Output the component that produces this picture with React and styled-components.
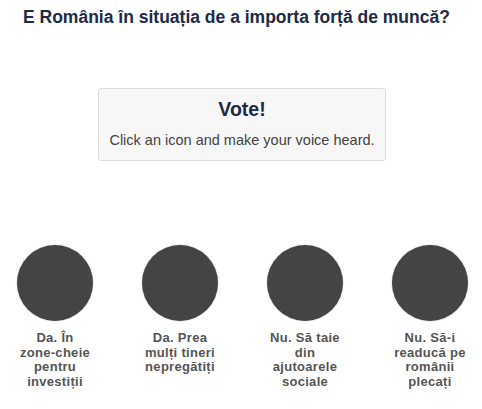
import React from "react"
import styled, { createGlobalStyle } from "styled-components"

const GlobalStyle = createGlobalStyle`
  body{
    margin:0;
    background:#fff;
    font-family:"Liberation Sans", Arial, sans-serif;
  }
`

const options = [
  ["Da. În", "zone-cheie", "pentru", "investiții"],
  ["Da. Prea", "mulți tineri", "nepregătiți"],
  ["Nu. Să taie", "din", "ajutoarele", "sociale"],
  ["Nu. Să-i", "readucă pe", "românii", "plecați"],
]

const App = () =>{
  return(
    <Poll>
      <GlobalStyle />
      <Question>E România în situația de a importa forță de muncă?</Question>
      <VoteBox>
        <VoteTitle>Vote!</VoteTitle>
        <VoteHint>Click an icon and make your voice heard.</VoteHint>
      </VoteBox>
      <Choices>
        {options.map((lines) => (
          <Choice key={lines.join(" ")}>
            <ChoiceIcon />
            <ChoiceLabel>
              {lines.map((line) => <span key={line}>{line}</span>)}
            </ChoiceLabel>
          </Choice>
        ))}
      </Choices>
    </Poll>
  )
}
export default App

const Poll = styled.div`
  width:482px;
  display:flex;
  flex-flow:column;
`
const Question = styled.h2`
  margin:7px 0 0 23px;
  font-size:17.5px;
  line-height:20px;
  font-weight:700;
  color:#1d2b48;
`
const VoteBox = styled.div`
  align-self:flex-start;
  margin:61px 0 0 98px;
  width:286px;
  height:71px;
  box-sizing:content-box;
  border:1px solid #dcdcdc;
  border-radius:3px;
  background:#f7f7f7;
  display:flex;
  flex-flow:column;
  align-items:center;
`
const VoteTitle = styled.div`
  margin-top:8px;
  font-size:19.5px;
  line-height:24px;
  font-weight:700;
  color:#1b2b49;
`
const VoteHint = styled.div`
  margin-top:9px;
  font-size:14.5px;
  line-height:20px;
  color:#444;
`
const Choices = styled.div`
  display:flex;
  gap:49px;
  padding-left:17px;
  margin-top:84px;
`
const Choice = styled.div`
  width:76px;
  display:flex;
  flex-flow:column;
  align-items:center;
`
const ChoiceIcon = styled.div`
  width:76px;
  height:76px;
  border-radius:50%;
  background:#444;
  box-shadow:0 0 1.5px rgba(0,0,0,.35);
  cursor:pointer;
`
const ChoiceLabel = styled.div`
  margin-top:10px;
  display:flex;
  flex-flow:column;
  align-items:center;
  font-size:13px;
  line-height:14.5px;
  font-weight:700;
  letter-spacing:.3px;
  color:#555;
  white-space:nowrap;
`
